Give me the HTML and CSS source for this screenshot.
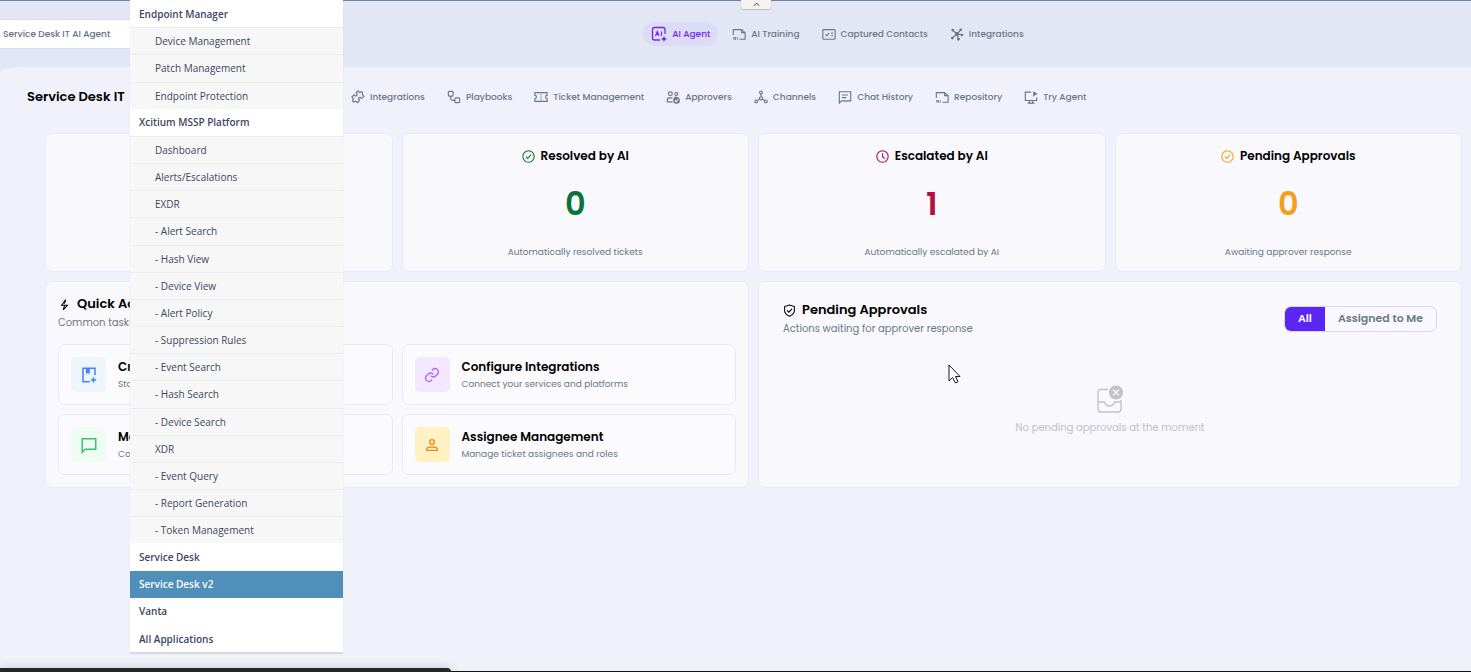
FILE: index.html
```html
<!DOCTYPE html>
<html lang="en">
<head>
    <meta charset="UTF-8">
    <meta name="viewport" content="width=device-width, initial-scale=1.0">
    <title>Service Desk IT AI Agent</title>
    <link rel="stylesheet" href="styles.css">
</head>
<body>
    <header class="topbar">
        <button class="agent-select" type="button">Service Desk IT AI Agent</button>
        <nav class="main-nav">
            <a class="active" href="#">
                <svg viewBox="0 0 16 16"><path d="M14 8V3.500Q14 1.500 12 1.500H3.500Q1.500 1.500 1.500 3.500V12Q1.500 14 3.500 14H9"/><path d="M4.500 10L6.300 5.500L8.100 10M5.200 8.500H7.500M10.500 5.500V10" stroke-width="1.100"/><path class="fill" d="M13 10l.9 2.100 2.100.9-2.100.9L13 16l-.9-2.100L10 13l2.100-.9z"/></svg>
                AI Agent
            </a>
            <a href="#">
                <svg viewBox="0 0 16 16"><path d="M1.500 9V3H11L15 6.500V14H8.500M11 3V6.500H15"/><path d="M2 14.500V11.500L4 14.500V11.500M6 11.500V14.500" stroke-width="1"/></svg>
                AI Training
            </a>
            <a href="#">
                <svg viewBox="0 0 16 16"><rect x="1" y="3" width="14" height="11" rx="1"/><path d="M4 8.500L5.500 10L8 7M10.500 7H12.500M10.500 10H12.500"/></svg>
                Captured Contacts
            </a>
            <a href="#">
                <svg viewBox="0 0 16 16"><path d="M8 8L3.500 4M8 8L12 3.500M8 8L3 12.500M8 8L13.500 9M8 8L9.500 13.500"/><g class="fill"><circle cx="8" cy="8" r="2.400"/><circle cx="3.200" cy="3.500" r="1.600"/><circle cx="12.300" cy="3.200" r="1.600"/><circle cx="2.700" cy="12.700" r="1.600"/><circle cx="13.800" cy="9.200" r="1.400"/><circle cx="9.600" cy="14" r="1.600"/></g></svg>
                Integrations
            </a>
        </nav>
        <button class="collapse" type="button" aria-label="Collapse header">
            <svg viewBox="0 0 8 5"><path d="M1 4L4 1L7 4"/></svg>
        </button>
    </header>

    <main class="page">
        <div class="page-head">
            <h1>Service Desk IT</h1>
            <nav class="sub-nav">
                <a href="#">
                    <svg class="puzzle" viewBox="0 0 24 24"><path d="M15.400 4.400a2.300 2.300 0 0 1 4.200 2.200c-.5 1-.3 1.500.4 2.200l2 2-3 3c-.8.8-1.500.7-2-.1a2.200 2.200 0 1 0-3 3c.8.500.9 1.200.1 2l-3 3-2.300-2.300c-.6-.6-1.200-.6-1.900.1a2.300 2.300 0 1 1-3.200-3.200c.7-.7.700-1.300.1-1.900L1.500 12l3-3c.8-.8 1.500-.7 2 .1a2.200 2.200 0 1 0 3-3c-.8-.5-.9-1.200-.1-2L12 1.500l2 2c.5.600 1 1 1.400.9z"/></svg>
                    Integrations
                </a>
                <a href="#">
                    <svg viewBox="0 0 16 16"><rect x="1.500" y="1.500" width="5.500" height="5.500" rx="1.500"/><rect x="9" y="9" width="5.500" height="5.500" rx="1.500"/><path d="M4.200 7V9.800Q4.200 11.800 6.200 11.800H9"/></svg>
                    Playbooks
                </a>
                <a href="#">
                    <svg viewBox="0 0 16 16"><path d="M1 3H15V6.200A1.800 1.800 0 0 0 15 9.800V13H1V9.800A1.800 1.800 0 0 0 1 6.200Z"/><path d="M8 4.500V6M8 7.300V8.800M8 10V11.500"/></svg>
                    Ticket Management
                </a>
                <a href="#">
                    <svg viewBox="0 0 16 16"><circle cx="5" cy="4.300" r="2.200"/><circle cx="11.800" cy="4.500" r="1.700"/><path d="M7.500 13.500H1.500V11.500Q1.500 9 4 9H7.500M9.500 8.500H13"/><circle class="fill" cx="12" cy="12" r="3.800"/><path class="check" d="M10.200 12L11.500 13.300L13.900 10.800"/></svg>
                    Approvers
                </a>
                <a href="#">
                    <svg viewBox="0 0 16 16"><circle cx="8" cy="2.800" r="1.600"/><circle cx="2.500" cy="13" r="1.600"/><circle cx="13.500" cy="13" r="1.600"/><circle cx="8" cy="9.500" r="1.800"/><path d="M8 4.500V7.700M6.500 10.500L3.800 12M9.500 10.500L12.200 12"/></svg>
                    Channels
                </a>
                <a href="#">
                    <svg viewBox="0 0 16 16"><path d="M1.500 15V2H14.500V12.500H4Z"/><path d="M4.500 5.700H11.500M4.500 8.700H9.500"/></svg>
                    Chat History
                </a>
                <a href="#">
                    <svg viewBox="0 0 16 16"><path d="M1.500 9V3H11L15 6.500V14H8.500M11 3V6.500H15"/><path d="M2 14.500V11.500L4 14.500V11.500M6 11.500V14.500" stroke-width="1"/></svg>
                    Repository
                </a>
                <a href="#">
                    <svg viewBox="0 0 16 16"><path d="M8 2.500H1.500V12H14.500V8.500M6.300 12V14.500M9.700 12V14.500M4 15H12"/><path class="fill" d="M10.500 1.300L15.500 4.300L10.500 7.300Z"/></svg>
                    Try Agent
                </a>
            </nav>
        </div>

        <div class="dashboard">
            <section class="card stat"></section>
            <section class="card stat resolved">
                <h2><svg viewBox="0 0 16 16"><circle cx="8" cy="8" r="7"/><path d="M4.800 8.200L7 10.400L11.300 5.800"/></svg>Resolved by AI</h2>
                <p class="stat-value">0</p>
                <p class="stat-note">Automatically resolved tickets</p>
            </section>
            <section class="card stat escalated">
                <h2><svg viewBox="0 0 16 16"><circle cx="8" cy="8" r="7"/><path d="M8 4V8.300L10.800 10.500"/></svg>Escalated by AI</h2>
                <p class="stat-value">1</p>
                <p class="stat-note">Automatically escalated by AI</p>
            </section>
            <section class="card stat pending">
                <h2><svg viewBox="0 0 16 16"><circle cx="8" cy="8" r="7"/><path d="M4.800 8.200L7 10.400L11.300 5.800"/></svg>Pending Approvals</h2>
                <p class="stat-value">0</p>
                <p class="stat-note">Awaiting approver response</p>
            </section>

            <section class="card quick">
                <h2 class="section-title"><svg viewBox="0 0 16 16"><path d="M9.500 2L4.500 9H11.500L6.500 14.500L8 9M9.500 2L8 7"/></svg>Quick Actions</h2>
                <p class="section-note">Common tasks</p>
                <div class="action-grid">
                    <a class="action" href="#">
                        <span class="tile blue"><svg viewBox="0 0 24 24"><path d="M20 12V3H4V21H13M18 15V22M14.500 18.500H21.500"/><path class="fill" d="M8 3H13V11L10.500 9L8 11Z"/></svg></span>
                        <span class="action-text"><strong>Create</strong><small>Start</small></span>
                    </a>
                    <a class="action" href="#">
                        <span class="tile purple"><svg viewBox="0 0 24 24"><path d="M10 13a5 5 0 0 0 7.500.5l3-3a5 5 0 0 0-7-7l-1.700 1.700"/><path d="M14 11a5 5 0 0 0-7.500-.5l-3 3a5 5 0 0 0 7 7l1.700-1.700"/></svg></span>
                        <span class="action-text"><strong>Configure Integrations</strong><small>Connect your services and platforms</small></span>
                    </a>
                    <a class="action" href="#">
                        <span class="tile green"><svg viewBox="0 0 24 24"><path d="M3 21.500V3.500H21V17.500H7Z"/></svg></span>
                        <span class="action-text"><strong>Ma</strong><small>Co</small></span>
                    </a>
                    <a class="action" href="#">
                        <span class="tile yellow"><svg viewBox="0 0 24 24"><circle cx="12" cy="7.500" r="3.500"/><path d="M4 20V18Q4 15 12 15T20 18V20Z"/></svg></span>
                        <span class="action-text"><strong>Assignee Management</strong><small>Manage ticket assignees and roles</small></span>
                    </a>
                </div>
            </section>

            <section class="card approvals">
                <div class="approvals-head">
                    <div>
                        <h2 class="section-title"><svg viewBox="0 0 16 16"><path d="M8 1.200L14 3.200V8Q14 12.500 8 15Q2 12.500 2 8V3.200Z"/><path d="M5 7.800L7.200 10L11 6"/></svg>Pending Approvals</h2>
                        <p class="section-note">Actions waiting for approver response</p>
                    </div>
                    <div class="toggle">
                        <button class="selected" type="button">All</button>
                        <button type="button">Assigned to Me</button>
                    </div>
                </div>
                <div class="empty">
                    <svg viewBox="0 0 28 28"><path d="M12 4.500H5Q2 4.500 2 7.500V24Q2 27 5 27H22Q25 27 25 24V15M2 17H8.500Q10 21 13.500 21T18.500 17H25"/><circle class="fill" cx="20" cy="7.500" r="7"/><path class="cross" d="M17 4.500L23 10.500M23 4.500L17 10.500"/></svg>
                    <p>No pending approvals at the moment</p>
                </div>
            </section>
        </div>
    </main>

    <ul class="app-menu">
        <li><a href="#">Endpoint Manager</a></li>
        <li class="sub"><a href="#">Device Management</a></li>
        <li class="sub"><a href="#">Patch Management</a></li>
        <li class="sub"><a href="#">Endpoint Protection</a></li>
        <li><a href="#">Xcitium MSSP Platform</a></li>
        <li class="sub"><a href="#">Dashboard</a></li>
        <li class="sub"><a href="#">Alerts/Escalations</a></li>
        <li class="sub"><a href="#">EXDR</a></li>
        <li class="sub"><a href="#">- Alert Search</a></li>
        <li class="sub"><a href="#">- Hash View</a></li>
        <li class="sub"><a href="#">- Device View</a></li>
        <li class="sub"><a href="#">- Alert Policy</a></li>
        <li class="sub"><a href="#">- Suppression Rules</a></li>
        <li class="sub"><a href="#">- Event Search</a></li>
        <li class="sub"><a href="#">- Hash Search</a></li>
        <li class="sub"><a href="#">- Device Search</a></li>
        <li class="sub"><a href="#">XDR</a></li>
        <li class="sub"><a href="#">- Event Query</a></li>
        <li class="sub"><a href="#">- Report Generation</a></li>
        <li class="sub"><a href="#">- Token Management</a></li>
        <li><a href="#">Service Desk</a></li>
        <li class="current"><a href="#">Service Desk v2</a></li>
        <li><a href="#">Vanta</a></li>
        <li><a href="#">All Applications</a></li>
    </ul>

    <svg class="cursor" viewBox="0 0 13 20"><path d="M1 1V17L4.500 13.500L7.500 19L10 17.800L7.500 12.500H12Z"/></svg>
    <div class="dock"></div>
</body>
</html>
```

FILE: styles.css
```css
* {
    box-sizing: border-box;
}
body {
    font-family: Poppins, Inter, sans-serif;
    font-size: 9px;
    background-color: #e3e6f5;
    color: #000;
    margin: 0;
    min-height: 100vh;
    display: flex;
    flex-direction: column;
    position: relative;
    overflow: hidden;
}
h1, h2, p, ul {
    margin: 0;
    padding: 0;
}
a {
    color: inherit;
    text-decoration: none;
}
button {
    font-family: inherit;
    cursor: pointer;
}
svg {
    fill: none;
    stroke: currentColor;
    stroke-width: 1.3;
    flex-shrink: 0;
}
svg .fill {
    fill: currentColor;
    stroke: none;
}

/* header */
.topbar {
    height: 67px;
    border-top: 1px solid #71839c;
    display: flex;
    align-items: center;
    position: relative;
}
.agent-select {
    width: 204px;
    height: 30px;
    padding: 0 3px;
    border: 1px solid #dcd6fa;
    border-left: none;
    background: #fff;
    color: #64717f;
    font-size: 9px;
    font-weight: 500;
    text-align: left;
}
.main-nav {
    flex: 1;
    display: flex;
    justify-content: center;
    gap: 6px;
}
.main-nav a, .sub-nav a {
    display: flex;
    align-items: center;
    gap: 5px;
    color: #6b7884;
    font-weight: 500;
    white-space: nowrap;
}
.main-nav a {
    height: 24px;
    padding: 0 8px;
    border-radius: 12px;
}
.main-nav svg, .sub-nav svg {
    width: 14px;
    height: 14px;
}
.main-nav .active {
    background: #dddcf6;
    color: #7226f5;
}
.main-nav .active svg {
    width: 16px;
    height: 16px;
}
.collapse {
    position: absolute;
    top: -1px;
    left: 741px;
    width: 30px;
    height: 9px;
    padding: 0;
    border: none;
    border-radius: 0 0 3px 3px;
    background: #f3f3f2;
    box-shadow: 0 1px 1px #bbb;
    color: #777;
    display: flex;
    align-items: center;
    justify-content: center;
}
.collapse svg {
    width: 7px;
    height: 5px;
}

/* page */
.page {
    flex: 1;
    background: #f1f1fc;
    border-top-left-radius: 20px 6px;
    padding: 18px 9px 18px 27px;
}
.page-head {
    display: flex;
    align-items: center;
    height: 24px;
}
.page-head h1 {
    width: 324px;
    font-size: 13px;
    font-weight: 600;
}
.sub-nav {
    display: flex;
    gap: 22px;
}
.sub-nav .puzzle {
    stroke-width: 2;
}
.dashboard {
    display: grid;
    grid-template-columns: repeat(4, 1fr);
    gap: 9px;
    margin: 24px 0 0 18px;
}
.card {
    background: #f8f8fd;
    border: 1px solid #ebe8fb;
    border-radius: 7px;
}
.stat {
    padding: 12px 12px 11px;
    text-align: center;
}
.stat h2 {
    display: flex;
    align-items: center;
    justify-content: center;
    gap: 6px;
    font-size: 12px;
    font-weight: 600;
    line-height: 20px;
}
.stat h2 svg {
    width: 13px;
    height: 13px;
}
.stat-value {
    margin: 18px 0 20px;
    font-size: 32px;
    font-weight: 600;
    line-height: 40px;
}
.stat-note {
    color: #6b7884;
    line-height: 16px;
}
.resolved svg, .resolved .stat-value {
    color: #08733a;
}
.escalated svg, .escalated .stat-value {
    color: #b30f41;
}
.pending svg, .pending .stat-value {
    color: #f2a11f;
}

.section-title {
    display: flex;
    align-items: center;
    gap: 6px;
    font-size: 13px;
    font-weight: 600;
    line-height: 20px;
}
.section-title svg {
    width: 13px;
    height: 13px;
}
.section-note {
    margin-top: 1px;
    color: #6b7884;
    font-size: 10px;
    line-height: 16px;
}
.quick {
    grid-column: span 2;
    padding: 12px;
}
.action-grid {
    display: grid;
    grid-template-columns: 1fr 1fr;
    gap: 9px;
    margin-top: 13px;
}
.action {
    display: flex;
    align-items: center;
    gap: 12px;
    padding: 12px;
    background: #fbfbfe;
    border: 1px solid #ebe6fd;
    border-radius: 7px;
}
.tile {
    width: 35px;
    height: 35px;
    border-radius: 5px;
    display: flex;
    align-items: center;
    justify-content: center;
}
.tile svg {
    width: 18px;
    height: 18px;
    stroke-width: 2;
}
.tile.blue {
    background: #edf5ff;
    color: #3f83f8;
}
.tile.purple {
    background: #f3e8ff;
    color: #b065f8;
}
.tile.green {
    background: #effcf3;
    color: #35c768;
}
.tile.yellow {
    background: #fff1c2;
    color: #ee8a1d;
}
.tile.purple svg, .tile.yellow svg {
    width: 16px;
    height: 16px;
}
.action-text {
    display: flex;
    flex-direction: column;
}
.action-text strong {
    font-size: 12px;
    font-weight: 600;
    line-height: 18px;
}
.action-text small {
    color: #6b7884;
    font-size: 9px;
    line-height: 16px;
}

.approvals {
    grid-column: span 2;
    padding: 18px 24px;
}
.approvals-head {
    display: flex;
    align-items: center;
    justify-content: space-between;
}
.toggle {
    display: flex;
    height: 26px;
    border: 1px solid #d9d2fa;
    border-radius: 7px;
    overflow: hidden;
}
.toggle button {
    padding: 0 13px;
    border: none;
    background: transparent;
    color: #6b7884;
    font-size: 11px;
    font-weight: 600;
}
.toggle .selected {
    background: #5b25f2;
    color: #fff;
}
.empty {
    margin-top: 48px;
    display: flex;
    flex-direction: column;
    align-items: center;
    gap: 7px;
    color: #c2c2c5;
    font-size: 10px;
    line-height: 16px;
}
.empty svg {
    width: 28px;
    height: 28px;
}
svg .check, svg .cross {
    stroke: #f8f8fd;
}

/* application menu */
.app-menu {
    position: absolute;
    top: 0;
    bottom: 20px;
    left: 130px;
    width: 213px;
    display: flex;
    flex-direction: column;
    list-style: none;
    background: #fff;
    box-shadow: 0 2px 1px #d9dadb;
    color: #3d4665;
    font-family: "Open Sans", sans-serif;
    font-size: 10px;
    font-weight: 600;
}
.app-menu li {
    flex: 1 1 27px;
    display: flex;
    align-items: center;
    padding: 0 9px;
}
.app-menu .sub {
    padding-left: 25px;
    border-top: 1px solid #eaecef;
    background: #f7f7f7;
    font-weight: 400;
}
.app-menu .current {
    background: #4f8fb9;
    color: #fff;
}

.cursor {
    position: absolute;
    top: 364px;
    left: 948px;
    width: 13px;
    height: 20px;
    fill: #fff;
    stroke: #15152a;
    stroke-width: 1;
}
.dock {
    position: absolute;
    bottom: 0;
    left: 0;
    right: 0;
    height: 1px;
    background: #111;
}
.dock::before {
    content: "";
    position: absolute;
    bottom: 0;
    left: 0;
    width: 451px;
    height: 4px;
    border-top-right-radius: 4px;
    background: #262628;
    box-shadow: 0 0 10px rgba(0, 0, 0, 0.25);
}
```
